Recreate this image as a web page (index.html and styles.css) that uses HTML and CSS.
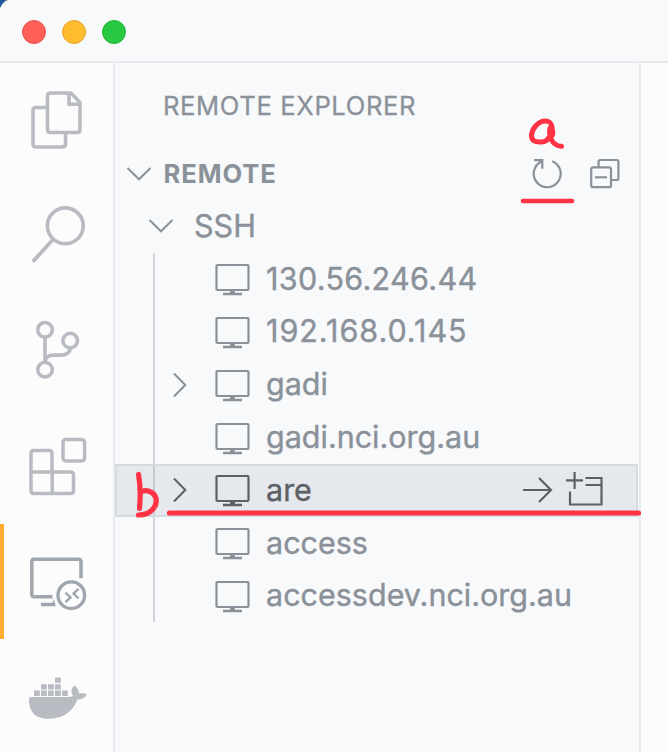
FILE: index.html
```html
<!DOCTYPE html>
<html lang="en">
<head>
<meta charset="utf-8">
<title>Remote Explorer</title>
<link rel="stylesheet" href="styles.css">
</head>
<body>
<svg width="0" height="0" class="defs">
  <symbol id="monitor" viewBox="0 0 36 34">
    <rect x="2.500" y="3" width="32" height="25" rx="1" fill="none" stroke="currentColor" stroke-width="2.200"/>
    <path d="M16.100 28h4.800v3h-4.800zM9 30.800h19v2.400H9z" fill="currentColor"/>
  </symbol>
  <symbol id="down" viewBox="0 0 26 16"><path d="M1.500 2 13 13.300 24.500 2" fill="none" stroke="currentColor" stroke-width="2"/></symbol>
  <symbol id="right" viewBox="0 0 16 26"><path d="M2 1.500 13.300 13 2 24.500" fill="none" stroke="currentColor" stroke-width="2"/></symbol>
</svg>
<div class="window">
  <header class="titlebar"><i class="light red"></i><i class="light yellow"></i><i class="light green"></i></header>
  <div class="body">
    <nav class="activity">
      <svg class="slot" viewBox="0 63 113 115.2"><g fill="none" stroke="currentColor" stroke-width="3.600" stroke-linejoin="round">
        <path d="M47.500 107.500H36q-3 0-3 3v33.500q0 3 3 3h26.500q3 0 3-3v-11"/><path d="M50.500 93H71l9 9.500v27q0 3-3 3H50.500q-3 0-3-3V96q0-3 3-3z"/><path d="M69 93v11.200h11"/></g></svg>
      <svg class="slot" viewBox="0 178.200 113 115.200"><g fill="none" stroke="currentColor" stroke-width="3.700"><circle cx="65.300" cy="226" r="17.900"/><path d="M53 239.600 32.800 262"/></g></svg>
      <svg class="slot" viewBox="0 293.400 113 115.200"><g fill="none" stroke="currentColor" stroke-width="3.600"><circle cx="45" cy="330.200" r="7.300"/><circle cx="70.200" cy="341" r="7.300"/><circle cx="45" cy="370" r="7.300"/><path d="M45 337.500v25.300c0-4.500 3.500-7.300 8-7.300h8c5 0 9-2.500 9.500-7.300"/></g></svg>
      <svg class="slot" viewBox="0 408.600 113 115.200"><g fill="none" stroke="currentColor" stroke-width="3.500"><rect x="63" y="439" width="21.600" height="21.600" rx="3"/><path d="M34 450h15q3 0 3 3v18.500h18.500q3 0 3 3V490q0 3-3 3H34q-3 0-3-3v-37q0-3 3-3zM31 471.500h21.200V493"/></g></svg>
      <div class="current"><svg class="slot" viewBox="0 523.800 113 115.200"><g fill="none" stroke="currentColor"><path stroke-width="3.500" d="M81 578v-16.500q0-2.500-2.500-2.500H34q-2.200 0-2.200 2.500V594q0 2.500 2.200 2.500h18.500"/><circle stroke-width="3.400" cx="71.300" cy="595" r="13.300"/><path stroke-width="2.300" d="m65.500 592.500 5 4.700-5 4.700M78.500 588.700l-5 4.700 5 4.700"/></g><path d="M41 602.500h11.600l1.200-4 2 7.500H41z" fill="currentColor"/></svg></div>
      <svg class="slot" viewBox="0 639 113 115.200"><path fill="currentColor" d="M29 699q0-1.900 2-1.900h36.500q3 0 5.500-1c-2.500-3.700-1.600-8.500 1.500-10.500 3 2.200 4.700 5 4.200 7.900 3-.8 6.200-.1 8.200.8-1.700 3.700-5.200 5.300-9.400 5.200C72.500 712 63 718.800 48 718.800 33 718.800 28.800 709 29 699zM34 690.500h5.800v5.600H34zM41 690.500h5.800v5.600H41zM48 690.500h5.800v5.600H48zM55 690.500h5.800v5.600H55zM62 690.500h5.800v5.600H62zM41 684.200h5.800v5.200H41zM48 684.200h5.800v5.200H48zM55 684.200h5.800v5.200H55zM55 677.600h5.800v5.200H55z"/></svg>
    </nav>
    <aside class="sidebar">
      <h1 class="heading"><span>REMOTE EXPLORER</span></h1>
      <div class="section">
        <svg class="chev" width="26" height="16"><use href="#down"/></svg>
        <span class="label">REMOTE</span>
        <svg class="refresh" width="32" height="32" viewBox="531 157 32 32" fill="none" stroke="currentColor" stroke-width="2.200"><path d="M533 159.200h8.300v8.500M540.500 160.500A13.500 13.500 0 1 0 551.200 160.200"/></svg>
        <svg width="32" height="32" viewBox="589 157 32 32" fill="none" stroke="currentColor" stroke-width="2.200"><path d="M598.600 166v-5.500q0-1.500 1.500-1.500h16.800q1.500 0 1.500 1.500v17q0 1.500-1.500 1.500H611"/><rect x="591.200" y="166.300" width="19.800" height="19.900" rx="1.800"/><path d="M595 176.300h12"/></svg>
      </div>
      <div class="row group"><svg class="chev" width="26" height="16"><use href="#down"/></svg><span class="name">SSH</span></div>
      <div class="tree">
        <div class="row"><span class="twisty"></span><svg class="pc"><use href="#monitor"/></svg><span class="name ip-a">130.56.246.44</span></div>
        <div class="row"><span class="twisty"></span><svg class="pc"><use href="#monitor"/></svg><span class="name ip-b">192.168.0.145</span></div>
        <div class="row"><span class="twisty"><svg width="16" height="26"><use href="#right"/></svg></span><svg class="pc"><use href="#monitor"/></svg><span class="name">gadi</span></div>
        <div class="row"><span class="twisty"></span><svg class="pc"><use href="#monitor"/></svg><span class="name">gadi.nci.org.au</span></div>
        <div class="row selected"><span class="twisty"><svg width="16" height="26"><use href="#right"/></svg></span><svg class="pc"><use href="#monitor"/></svg><span class="name">are</span>
          <svg class="actions" width="82" height="38" viewBox="522 472 82 38" fill="none" stroke="currentColor" stroke-width="2.200"><path d="M523 491h28M539 479l12 12-12 12M566 481.300h17M574.600 473v17M585.500 479H601.500v26.500H570V492.500M585.500 486H601.500"/></svg></div>
        <div class="row"><span class="twisty"></span><svg class="pc"><use href="#monitor"/></svg><span class="name">access</span></div>
        <div class="row"><span class="twisty"></span><svg class="pc"><use href="#monitor"/></svg><span class="name">accessdev.nci.org.au</span></div>
      </div>
    </aside>
    <main class="editor"></main>
  </div>
  <svg class="marks" width="668" height="752" viewBox="0 0 668 752" fill="none" stroke="#ff3344" stroke-linecap="round" stroke-linejoin="round">
    <path stroke-width="4.600" d="M523 201h49"/>
    <path stroke-width="5.200" d="M169.500 513h469"/>
    <path stroke-width="5" d="M552 127c-1-5-3-6-7-6-7 0-13 8-13.500 14-.5 6 4 7.500 10 7 7-.5 10-6 10-15M550 128c-1 4 0 8 1 11 2 4 6 7.300 10.500 7.200"/>
    <ellipse cx="551.500" cy="132.500" rx="3.800" ry="6.500" fill="#ff3344" stroke="none"/>
    <path stroke-width="5.200" d="M138.500 474.500c2 11 2 23 1 34M140.500 492.500c5-4 13-1 15 4.500 3 8-4 18-17 18"/>
  </svg>
</div>
</body>
</html>
```
FILE: styles.css
```css
* { box-sizing: border-box; }
body { margin: 0; background: linear-gradient(90deg, #1d5a9c 4px, #b5947b 8px); font-family: Inter, "Liberation Sans", sans-serif; color: #8a9199; }
svg { display: block; flex: none; }
.defs { position: absolute; }
.window { position: relative; height: 752px; overflow: hidden; border-top-left-radius: 11px; background: #fcfcfc; display: flex; flex-direction: column; }
.titlebar { height: 63px; flex: none; display: flex; align-items: center; gap: 16px; padding-left: 22px; background: #f8f9fb; border-bottom: 2px solid #e9eaed; padding-top: 3px; }
.light { width: 24px; height: 24px; border-radius: 50%; border: 1px solid; }
.red { background: #ff5f57; border-color: #e5514a; }
.yellow { background: #febc2e; border-color: #e1a325; }
.green { background: #28c840; border-color: #22b137; }
.body { display: flex; flex: 1; min-height: 0; }
.activity { width: 115px; border-right: 2px solid #e9eaef; color: #b9bbc2; flex: none; }
.slot { width: 113px; height: 115.2px; }
.current { color: #a0a6ad; background: linear-gradient(#ffaa33, #ffaa33) left / 4px 100% no-repeat; }
.sidebar { width: 526px; flex: none; background: #f8f9fb; border-right: 2px solid #e7e9ec; }
.heading { margin: 0; height: 84px; padding-left: 48px; line-height: 85px; font-size: 25.6px; font-weight: 400; letter-spacing: 0.63px; white-space: nowrap; -webkit-text-stroke: 0.3px; }
.section { height: 53px; display: flex; align-items: center; padding: 0 18px 0 11px; }
.section .label { font-weight: 700; font-size: 25.6px; letter-spacing: 0.9px; margin-left: 11.5px; flex: 1; }
.refresh { margin-right: 25px; }
.row { height: 52.8px; display: flex; align-items: center; font-size: 30.5px; white-space: nowrap; width: 523px; }
.name { padding-bottom: 2px; -webkit-text-stroke: 0.4px; }
.ip-a { letter-spacing: 0.33px; }
.ip-b { letter-spacing: 0.98px; }
.group { padding-left: 33px; }
.group .name { margin-left: 20px; }
.tree { background: linear-gradient(#d2d4d7, #d2d4d7) 38px 0 / 2px 100% no-repeat; }
.tree .row { padding-left: 57px; }
.twisty { width: 42px; flex: none; }
.pc { width: 36px; height: 34px; margin-right: 16px; }
.tree .selected { background: #6b7d8f22; color: #5c6166; box-shadow: inset 0 0 0 2px #d5dae2; }
.actions { margin-left: auto; margin-right: 34px; }
.marks { position: absolute; left: 0; top: 0; }
```
